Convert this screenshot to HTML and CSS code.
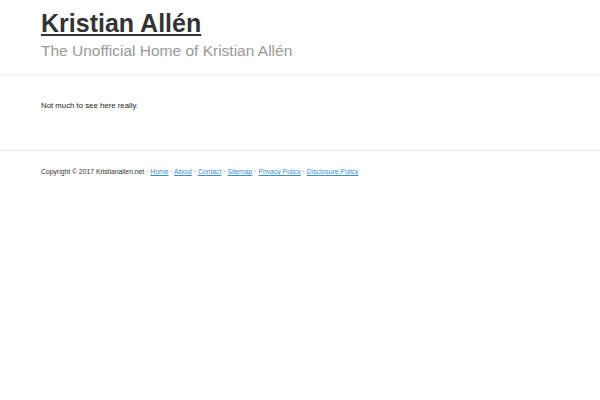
FILE: index.html
```html
<!DOCTYPE html>
<html lang="en">
<head>
<meta charset="utf-8">
<title>Kristian Allén</title>
<link rel="stylesheet" href="styles.css">
</head>
<body>
<header class="site-header">
  <h1 class="site-title"><a href="#">Kristian Allén</a></h1>
  <p class="site-desc">The Unofficial Home of Kristian Allén</p>
</header>
<main class="content">
  <p>Not much to see here really.</p>
</main>
<footer class="site-footer">
  <p>Copyright © 2017 Kristianallen.net · <a href="#">Home</a> · <a href="#">About</a> · <a href="#">Contact</a> · <a href="#">Sitemap</a> · <a href="#">Privacy Policy</a> · <a href="#">Disclosure Policy</a></p>
</footer>
</body>
</html>
```
FILE: styles.css
```css
html, body {
  margin: 0;
  padding: 0;
  background: #fff;
  font-family: "Liberation Sans", Arial, sans-serif;
  color: #333;
}

.site-header {
  padding: 9px 41px 15px;
  border-bottom: 1px solid #efefef;
}

.site-title {
  margin: 0;
  font-size: 25px;
  font-weight: bold;
  line-height: normal;
}

.site-title a {
  color: #333;
  text-decoration: underline;
}

.site-desc {
  margin: 4px 0 0;
  font-size: 15.5px;
  line-height: normal;
  color: #999;
}

.content {
  padding: 25px 41px 40px;
}

.content p {
  margin: 0;
  font-size: 7.8px;
  color: #222;
}

.site-footer {
  border-top: 1px solid #e6e6e6;
  padding: 17px 41px;
}

.site-footer p {
  margin: 0;
  font-size: 6.8px;
  color: #333;
}

.site-footer a {
  color: #3b8dd0;
  text-decoration: underline;
}
```
